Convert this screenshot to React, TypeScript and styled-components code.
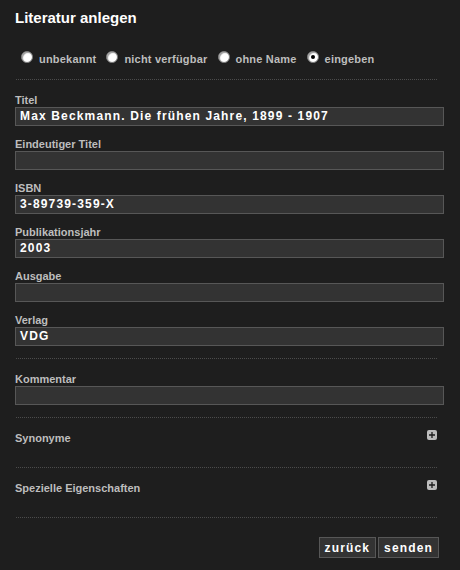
import styled, { createGlobalStyle } from "styled-components";

const GlobalStyle = createGlobalStyle`
    html, body {
        margin: 0;
        padding: 0;
        background: #1e1e1e;
    }
    body {
        font-family: "Liberation Sans", Arial, sans-serif;
    }
`;

const Page = styled.div`
    width: 460px;
    height: 570px;
    box-sizing: border-box;
    padding: 9px 16px 0 15px;
    background: #1e1e1e;
`;

const Title = styled.h1`
    margin: 0;
    font-size: 15px;
    line-height: 18px;
    font-weight: bold;
    color: #ffffff;
`;

// gepunktete Trennlinie zwischen den Abschnitten
const Divider = styled.hr`
    margin: 0 7px 0 1px;
    height: 0;
    border: 0;
    border-top: 1px dotted #4c4c4c;
`;

const RadioRow = styled.div`
    display: flex;
    align-items: center;
    gap: 10px;
    height: 14px;
    margin: 23px 0 15px 6px;
`;

const RadioLabel = styled.label`
    display: flex;
    align-items: center;
    gap: 6px;
    font-size: 11px;
    letter-spacing: 0.2px;
    font-weight: bold;
    color: #bdbdbd;

    span:last-child {
        padding-top: 3px;
    }
`;

const RadioDot = styled.span<{ $checked?: boolean }>`
    box-sizing: border-box;
    width: 12px;
    height: 12px;
    border-radius: 50%;
    background: #ffffff;
    border: 1px solid #7a7a7a;
    box-shadow: inset 1px 1px 1px #9a9a9a;
    display: flex;
    align-items: center;
    justify-content: center;

    &::after {
        content: "";
        display: ${(p) => (p.$checked ? "block" : "none")};
        width: 4px;
        height: 4px;
        border-radius: 50%;
        background: #000;
    }
`;

const Section = styled.div`
    padding: 14px 0 12px;
    display: flex;
    flex-direction: column;
    gap: 12px;
`;

const Field = styled.div`
    display: flex;
    flex-direction: column;
`;

const Label = styled.label`
    font-size: 11px;
    line-height: 13px;
    font-weight: bold;
    color: #bdbdbd;
`;

const Input = styled.div`
    box-sizing: border-box;
    height: 19px;
    background: #333333;
    border: 1px solid #575757;
    padding: 0 4px;
    font-family: "Liberation Sans", Arial, sans-serif;
    font-size: 12px;
    line-height: 17px;
    font-weight: bold;
    letter-spacing: 1.15px;
    color: #ffffff;
    white-space: nowrap;
    overflow: hidden;
`;

const Collapsible = styled.div`
    display: flex;
    justify-content: space-between;
    align-items: flex-start;
    padding: 14px 7px 22px 0;
    font-size: 11px;
    line-height: 13px;
    font-weight: bold;
    color: #bdbdbd;
`;

const PlusIcon = styled.span`
    width: 10px;
    height: 10px;
    border-radius: 2px;
    background: #bdbdbd;
    display: flex;
    align-items: center;
    justify-content: center;
    margin-top: -2px;
`;

const Actions = styled.div`
    display: flex;
    justify-content: flex-end;
    gap: 2px;
    margin-right: 5px;
    padding-top: 19px;
`;

const Button = styled.button`
    box-sizing: border-box;
    height: 21px;
    padding: 0 5px;
    background: #333333;
    border: 1px solid #575757;
    font-family: "Liberation Sans", Arial, sans-serif;
    font-size: 12px;
    font-weight: bold;
    letter-spacing: 1.15px;
    color: #ffffff;
`;

const fields = [
    { label: "Titel", value: "Max Beckmann. Die frühen Jahre, 1899 - 1907" },
    { label: "Eindeutiger Titel", value: "" },
    { label: "ISBN", value: "3-89739-359-X" },
    { label: "Publikationsjahr", value: "2003" },
    { label: "Ausgabe", value: "" },
    { label: "Verlag", value: "VDG" },
];

const radios = ["unbekannt", "nicht verfügbar", "ohne Name", "eingeben"];

const Plus = () => (
    <PlusIcon>
        <svg width="6" height="6" viewBox="0 0 6 6">
            <path d="M3 0v6M0 3h6" stroke="#1e1e1e" strokeWidth="1.3" />
        </svg>
    </PlusIcon>
);

export default function App() {
    return (
        <Page>
            <GlobalStyle />
            <Title>Literatur anlegen</Title>
            <RadioRow>
                {radios.map((r) => (
                    <RadioLabel key={r}>
                        <RadioDot $checked={r === "eingeben"} />
                        <span>{r}</span>
                    </RadioLabel>
                ))}
            </RadioRow>
            <Divider />

            <Section>
                {fields.map((f) => (
                    <Field key={f.label}>
                        <Label>{f.label}</Label>
                        <Input>{f.value}</Input>
                    </Field>
                ))}
            </Section>
            <Divider />

            <Section>
                <Field>
                    <Label>Kommentar</Label>
                    <Input />
                </Field>
            </Section>
            <Divider />

            <Collapsible>
                Synonyme
                <Plus />
            </Collapsible>
            <Divider />
            <Collapsible>
                Spezielle Eigenschaften
                <Plus />
            </Collapsible>
            <Divider />

            <Actions>
                <Button>zurück</Button>
                <Button>senden</Button>
            </Actions>
        </Page>
    );
}
